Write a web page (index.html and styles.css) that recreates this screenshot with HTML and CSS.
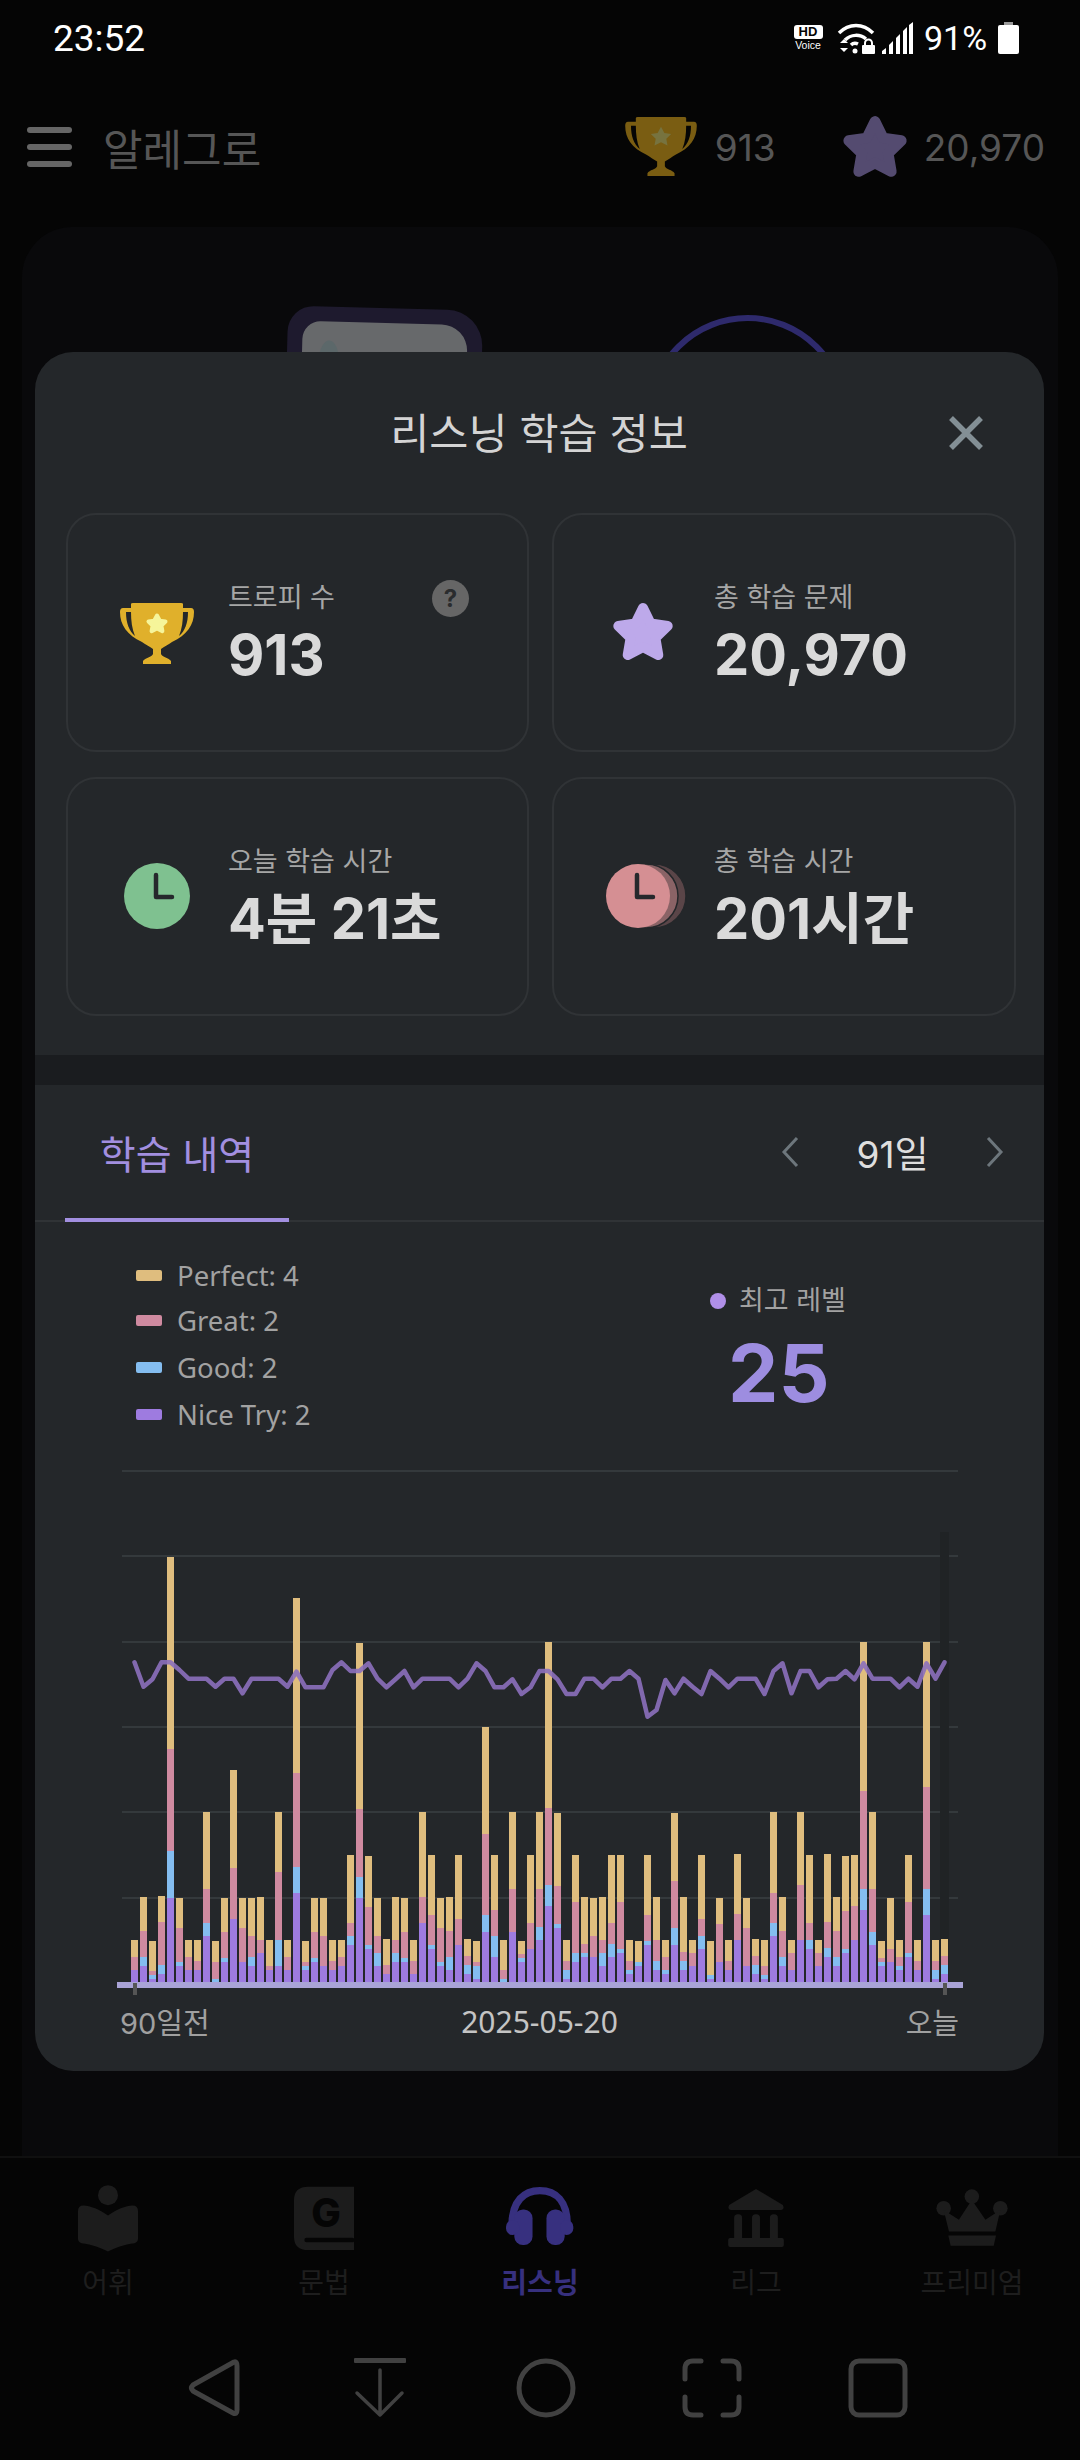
FILE: index.html
```html
<!DOCTYPE html>
<html lang="ko">
<head>
<meta charset="utf-8">
<title>리스닝 학습 정보</title>
<link rel="stylesheet" href="styles.css">
</head>
<body>
<div class="screen">
  <div class="status">
    <span class="clock-time">23:52</span>
    <div class="status-right">
      <div class="hd"><span class="hd-top">HD</span><span class="hd-bot">Voice</span></div>
      <svg class="st-wifi" viewBox="0 0 38 32"><path class="st-line" d="M2 11C12 1 26 1 36 11"/><path class="st-line" d="M8 18C14 12 23 12 29 17"/><path class="st-line" d="M14 23C16 21 19 21 21 22"/><circle class="st-fill" cx="18" cy="29" r="2.5"/><path class="st-fill" d="M3 21l4-4 4 4zM3 26h8l-4 4z"/><rect class="st-fill" x="25" y="23" width="13" height="9" rx="1"/><path class="st-thin" d="M28 24v-3a3.500 3.500 0 0 1 7 0v3"/></svg>
      <svg class="st-signal" viewBox="0 0 31 32"><path class="st-fill" d="M0 32v-3l4-3v6zM7 32V23l4-4v13zM14 32V16l4-4v20zM21 32V9l4-4v27zM27 32V3l4-3v32z"/></svg>
      <span class="st-pct">91%</span>
      <svg class="st-batt" viewBox="0 0 21 32"><rect class="st-dim" x="6" width="9" height="3"/><rect class="st-fill" y="3" width="21" height="29" rx="2"/></svg>
    </div>
  </div>

  <header class="topbar">
    <div class="burger"><i></i><i></i><i></i></div>
    <span class="app-name">알레그로</span>
    <div class="top-stats">
      <svg class="top-trophy" viewBox="0 0 76 62">
        <path class="tr-dim" fill-rule="evenodd" d="M12 1Q12 0 14 0H62Q64 0 64 1V5H72Q75 5 75 9C75 22 68 32 53 39C50 41 45 44 42 46L42 51C43 54 50 55 52 58V61H24V58C26 55 33 54 34 51L34 46C31 44 26 41 23 39C8 32 1 22 1 9Q1 5 4 5H12ZM7 9H12C12 18 13 26 16 33C10 28 7 20 7 9ZM69 9H64C64 18 63 26 60 33C66 28 69 20 69 9Z"/>
        <path class="tr-dim-star" d="M38 10l3.500 6.500 7 1-5 5 1.200 7L38 26l-6.700 3.500 1.200-7-5-5 7-1z"/>
      </svg>
      <span class="top-num">913</span>
      <svg class="top-star" viewBox="0 0 64 62"><path class="star-dim" d="M32 7L39.600 22.500 56.700 25 44.400 37 47.300 54 32 46 16.700 54 19.600 37 7.300 25 24.400 22.500Z"/></svg>
      <span class="top-num">20,970</span>
    </div>
  </header>

  <main class="bg-card">
    <div class="art">
      <div class="art-book"><div class="art-page"><span class="art-blob"></span></div></div>
      <div class="art-ring"></div>
    </div>
  </main>

  <nav class="tabbar">
    <div class="tab-item">
      <svg class="tab-ic ic-reader" viewBox="114 44 180 200"><circle class="nav-fill" cx="204" cy="74" r="30"/><path class="nav-fill" d="M204 135C180 118 150 105 130 105Q114 105 114 122V205Q114 215 125 218C155 222 185 232 204 243C223 232 253 222 283 218Q294 215 294 205V122Q294 105 278 105C258 105 228 118 204 135Z"/></svg>
      <span class="tab-label">어휘</span>
    </div>
    <div class="tab-item">
      <svg class="tab-ic ic-gbook" viewBox="762 48 180 192"><path class="nav-fill" d="M762 90Q762 50 805 50H942V240H805Q762 240 762 200Z"/><rect class="nav-cut" x="793" y="203" width="150" height="14" rx="7"/><text class="nav-g" x="858" y="170" text-anchor="middle">G</text></svg>
      <span class="tab-label">문법</span>
    </div>
    <div class="tab-item active">
      <svg class="tab-ic ic-phones" viewBox="15 50 205 178"><path class="hp-band" d="M33 165C33 92 70 61 117 61C165 61 200 92 200 165"/><rect class="hp-cup" x="40" y="118" width="55" height="107" rx="26"/><rect class="hp-cup" x="137" y="118" width="55" height="107" rx="26"/><rect class="hp-cup" x="15" y="150" width="40" height="45" rx="20"/><rect class="hp-cup" x="178" y="150" width="40" height="45" rx="20"/></svg>
      <span class="tab-label">리스닝</span>
    </div>
    <div class="tab-item">
      <svg class="tab-ic ic-bank" viewBox="660 57 168 175"><path class="nav-fill" d="M744 57L825 105Q831 120 820 120H668Q657 120 663 105Z"/><rect class="nav-fill" x="678" y="133" width="24" height="85" rx="11"/><rect class="nav-fill" x="732" y="133" width="24" height="85" rx="11"/><rect class="nav-fill" x="786" y="133" width="24" height="85" rx="11"/><rect class="nav-fill" x="660" y="205" width="168" height="27" rx="6"/></svg>
      <span class="tab-label">리그</span>
    </div>
    <div class="tab-item">
      <svg class="tab-ic ic-crown" viewBox="1262 57 215 172"><circle class="nav-fill" cx="1369" cy="80" r="22"/><circle class="nav-fill" cx="1284" cy="115" r="22"/><circle class="nav-fill" cx="1455" cy="115" r="22"/><path class="nav-fill" d="M1369 90L1410 150 1455 120 1440 185H1300L1284 120 1330 150Z"/><path class="nav-fill" d="M1298 197H1442L1435 228H1305Z"/></svg>
      <span class="tab-label">프리미엄</span>
    </div>
  </nav>

  <div class="sysnav">
    <div class="sys-cell"><svg class="sys-ic" viewBox="0 0 52 60"><path class="sys-line" d="M46 4Q49 3 49 8V52Q49 57 45 55L5 33Q2 30 5 27Z"/></svg></div>
    <div class="sys-cell"><svg class="sys-ic" viewBox="0 0 52 60"><rect class="sys-solid" y="0" width="52" height="5" rx="1"/><path class="sys-line-thin" d="M26 12V57M3 35L26 57 48 35"/></svg></div>
    <div class="sys-cell"><svg class="sys-ic" viewBox="0 0 60 60"><circle class="sys-line" cx="30" cy="30" r="27"/></svg></div>
    <div class="sys-cell"><svg class="sys-ic" viewBox="0 0 60 60"><path class="sys-line" d="M3 21V11Q3 3 11 3H19M41 3H49Q57 3 57 11V21M57 39V49Q57 57 49 57H41M19 57H11Q3 57 3 49V39"/></svg></div>
    <div class="sys-cell"><svg class="sys-ic" viewBox="0 0 60 60"><rect class="sys-line" x="3" y="3" width="54" height="54" rx="8"/></svg></div>
  </div>

  <section class="modal">
    <div class="modal-head">
      <h1 class="modal-title">리스닝 학습 정보</h1>
      <svg class="modal-close" viewBox="0 0 36 36"><path d="M3 3L33 33M33 3L3 33"/></svg>
    </div>

    <div class="cards">
      <div class="card">
        <svg class="ic-trophy" viewBox="0 0 76 62">
          <path class="tr-fill" fill-rule="evenodd" d="M12 1Q12 0 14 0H62Q64 0 64 1V5H72Q75 5 75 9C75 22 68 32 53 39C50 41 45 44 42 46L42 51C43 54 50 55 52 58V61H24V58C26 55 33 54 34 51L34 46C31 44 26 41 23 39C8 32 1 22 1 9Q1 5 4 5H12ZM7 9H12C12 18 13 26 16 33C10 28 7 20 7 9ZM69 9H64C64 18 63 26 60 33C66 28 69 20 69 9Z"/>
          <path class="tr-star" d="M38 12.500l2.800 5.200 5.700 .8-4.100 4 1 5.700-5.400-2.800-5.400 2.800 1-5.700-4.100-4 5.700-.8z"/>
        </svg>
        <div class="card-text"><span class="card-label">트로피 수</span><span class="card-value">913</span></div>
        <span class="help">?</span>
      </div>
      <div class="card">
        <svg class="ic-star" viewBox="0 0 64 62"><path class="star-fill" d="M32 7L39.600 22.500 56.700 25 44.400 37 47.300 54 32 46 16.700 54 19.600 37 7.300 25 24.400 22.500Z"/></svg>
        <div class="card-text"><span class="card-label">총 학습 문제</span><span class="card-value">20,970</span></div>
      </div>
      <div class="card">
        <svg class="ic-clock" viewBox="0 0 66 66"><circle class="clk-green" cx="33" cy="33" r="33"/><path class="clk-hand" d="M32 12V34H48"/></svg>
        <div class="card-text"><span class="card-label">오늘 학습 시간</span><span class="card-value">4분 21초</span></div>
      </div>
      <div class="card">
        <svg class="ic-clocks" viewBox="0 0 82 66"><circle class="clk-back2" cx="49" cy="33" r="32"/><circle class="clk-back1" cx="41" cy="33" r="32"/><circle class="clk-pink" cx="33" cy="33" r="32"/><path class="clk-hand" d="M32 12V34H48"/></svg>
        <div class="card-text"><span class="card-label">총 학습 시간</span><span class="card-value">201시간</span></div>
      </div>
    </div>

    <div class="band"></div>

    <div class="tabs">
      <div class="tab-on">학습 내역</div>
      <div class="range">
        <svg class="chev" viewBox="0 0 18 32"><path d="M16 2L3 16 16 30"/></svg>
        <span class="range-val">91일</span>
        <svg class="chev" viewBox="0 0 18 32"><path d="M2 2L15 16 2 30"/></svg>
      </div>
    </div>

    <div class="stats">
      <ul class="legend">
        <li class="lg-row lg-first"><i class="sw sw-perfect"></i>Perfect: 4</li>
        <li class="lg-row"><i class="sw sw-great"></i>Great: 2</li>
        <li class="lg-row"><i class="sw sw-good"></i>Good: 2</li>
        <li class="lg-row"><i class="sw sw-nice"></i>Nice Try: 2</li>
      </ul>
      <div class="level">
        <div class="level-label"><i class="level-dot"></i>최고 레벨</div>
        <div class="level-val">25</div>
      </div>
    </div>

    <svg id="chart" class="chart" viewBox="36 1450 1008 550"></svg>

    <div class="axis-labels"><span>90일전</span><span class="axis-date">2025-05-20</span><span class="axis-end">오늘</span></div>
  </section>
</div>
<script src="chart.js"></script>
</body>
</html>
```

FILE: styles.css
```css
* { box-sizing: border-box; }
html, body { margin: 0; padding: 0; background: #050505; }
body { font-family: "Inter", "Noto Sans CJK KR", sans-serif; }
.screen { position: relative; width: 1080px; height: 2460px; overflow: hidden; display: flex; flex-direction: column; background: #050505; }

/* status bar */
.status { height: 76px; flex: none; display: flex; align-items: center; justify-content: space-between; padding: 0 61px 0 53px; color: #fff; font-family: "Roboto", sans-serif; }
.clock-time { font-size: 37px; }
.status-right { display: flex; align-items: center; }
.hd { width: 30px; display: flex; flex-direction: column; align-items: center; margin-right: 14px; }
.hd-top { width: 29px; height: 14px; background: #fff; color: #050505; border-radius: 3px; font: 700 13px/14px "Liberation Sans", sans-serif; text-align: center; }
.hd-bot { font: 400 10.500px/12px "Liberation Sans", sans-serif; margin-top: 0; }
.st-wifi { width: 38px; height: 32px; margin-right: 7px; }
.st-signal { width: 31px; height: 32px; margin-right: 11px; }
.st-pct { font-size: 34px; width: 61px; margin-right: 13px; white-space: nowrap; }
.st-batt { width: 21px; height: 32px; }
.st-line { fill: none; stroke: #fff; stroke-width: 3.500; }
.st-thin { fill: none; stroke: #fff; stroke-width: 2; }
.st-fill { fill: #fff; }
.st-dim { fill: #9a9a9a; }

/* top bar */
.topbar { height: 142px; flex: none; display: flex; align-items: center; padding: 0 35px 0 27px; }
.burger { width: 45px; display: flex; flex-direction: column; gap: 11px; }
.burger i { display: block; height: 6px; border-radius: 3px; background: #666; }
.app-name { margin-left: 31px; font-size: 43px; color: #565656; }
.top-stats { margin-left: auto; display: flex; align-items: center; }
.top-trophy { width: 74px; height: 60px; margin-right: 17px; }
.top-star { width: 70px; height: 66px; margin: 0 14px 0 64px; }
.top-num { font-size: 37px; color: #565656; }
.tr-dim { fill: #7a5d12; }
.tr-dim-star { fill: #77733f; }
.star-dim { fill: #544b70; stroke: #544b70; stroke-width: 10; stroke-linejoin: round; }

/* dimmed background card */
.bg-card { height: 1929px; flex: none; margin: 9px 22px 0; background: #09090b; border-radius: 50px 50px 0 0; }
.art { position: relative; height: 125px; overflow: hidden; }
.art-book { position: absolute; left: 265px; top: 81px; width: 195px; height: 90px; background: #1e1a2e; border-radius: 26px 36px 0 0; transform: rotate(1.500deg); padding: 15px 15px 0; }
.art-page { height: 70px; background: #67696b; border-radius: 18px 26px 0 0; position: relative; }
.art-blob { position: absolute; left: 17px; top: 19px; width: 20px; height: 40px; border-radius: 50%; background: #5c686a; }
.art-ring { position: absolute; left: 625px; top: 88px; width: 201px; height: 201px; border: 6px solid #2e2a6c; border-radius: 50%; }

/* bottom tab bar */
.tabbar { height: 154px; flex: none; border-top: 2px solid #101010; background: #050505; display: grid; grid-template-columns: repeat(5, 1fr); padding-top: 27px; }
.tab-item { display: flex; flex-direction: column; align-items: center; }
.tab-ic { display: block; flex: none; }
.ic-reader { width: 60px; height: 67px; margin-bottom: 1px; }
.ic-gbook { width: 60px; height: 64px; margin: 1px 0 3px; }
.ic-phones { width: 68px; height: 59px; margin: 2px 0 7px; }
.ic-bank { width: 56px; height: 58px; margin: 4px 0 6px; }
.ic-crown { width: 72px; height: 57px; margin: 4px 0 7px; }
.tab-label { margin-top: 8px; font-size: 28px; line-height: 44px; color: #1e1e1e; }
.tab-item.active .tab-label { color: #37307f; font-weight: 700; }
.nav-fill { fill: #1c1c1c; }
.nav-cut { fill: #050505; }
.nav-g { font: 800 118px "Inter", sans-serif; fill: #050505; }
.hp-band { fill: none; stroke: #37307f; stroke-width: 22; }
.hp-cup { fill: #37307f; }

/* system nav */
.sysnav { flex: 1; display: flex; justify-content: center; padding: 48px 0 0 12px; background: #050505; }
.sys-cell { width: 166px; display: flex; justify-content: center; }
.sys-ic { width: 60px; height: 60px; }
.sys-line { fill: none; stroke: #414141; stroke-width: 5; stroke-linejoin: round; stroke-linecap: round; }
.sys-line-thin { fill: none; stroke: #414141; stroke-width: 3.500; stroke-linejoin: round; stroke-linecap: round; }
.sys-solid { fill: #414141; }

/* modal */
.modal { position: absolute; left: 35px; top: 352px; width: 1009px; height: 1719px; background: #24272a; border-radius: 38px; color: #ddd; }
.modal-head { height: 161px; display: flex; align-items: center; justify-content: center; position: relative; padding: 0 1px 4px 0; }
.modal-title { margin: 0; font-size: 42.500px; font-weight: 400; color: #d4d4d4; }
.modal-close { position: absolute; right: 60px; top: 63px; width: 36px; height: 36px; }
.modal-close path { fill: none; stroke: #838f95; stroke-width: 5.500; }

.cards { display: grid; grid-template-columns: 463px 464px; grid-template-rows: 239px 239px; column-gap: 23px; row-gap: 25px; padding-left: 31px; }
.card { position: relative; display: flex; align-items: center; border: 2px solid #303336; border-radius: 30px; padding-left: 160px; }
.card-text { display: flex; flex-direction: column; }
.card-label { font-size: 27px; line-height: 38px; color: #a6a6a6; }
.card-value { font-size: 56px; line-height: 64px; font-weight: 700; color: #dadada; white-space: nowrap; margin-top: 6px; }
.help { position: absolute; left: 364px; top: 65px; width: 37px; height: 37px; border-radius: 50%; background: #666; color: #2a2c2e; font: 700 24px/37px "Inter", sans-serif; text-align: center; }
.ic-trophy { position: absolute; left: 51px; top: 88px; width: 76px; height: 62px; }
.tr-fill { fill: #e0b02b; }
.tr-star { fill: #f6f59a; stroke: #f6f59a; stroke-width: 4; stroke-linejoin: round; }
.ic-star { position: absolute; left: 57px; top: 86px; width: 64px; height: 62px; }
.star-fill { fill: #bda9ea; stroke: #bda9ea; stroke-width: 10; stroke-linejoin: round; }
.ic-clock { position: absolute; left: 56px; top: 84px; width: 66px; height: 66px; }
.ic-clocks { position: absolute; left: 51px; top: 84px; width: 82px; height: 66px; }
.clk-green { fill: #7fc190; }
.clk-pink { fill: #d58f93; }
.clk-back1 { fill: #8a6366; stroke: #24272a; stroke-width: 1.500; }
.clk-back2 { fill: #5a4548; stroke: #24272a; stroke-width: 1.500; }
.clk-hand { fill: none; stroke: #26282c; stroke-width: 4.500; stroke-linejoin: round; stroke-linecap: round; }

.band { height: 30px; margin-top: 39px; background: #1a1c1f; }
.tabs { height: 137px; display: flex; justify-content: space-between; border-bottom: 2px solid #303336; padding: 0 40px 0 30px; }
.tab-on { width: 224px; height: 137px; display: flex; align-items: center; justify-content: center; border-bottom: 4px solid #a28fe0; font-size: 39px; color: #a28fe0; }
.range { display: flex; align-items: center; padding-bottom: 2px; }
.chev { width: 18px; height: 32px; }
.chev path { fill: none; stroke: #6d767c; stroke-width: 3; }
.range-val { width: 187px; text-align: center; font-size: 37px; color: #dedede; }

.stats { height: 228px; display: flex; }
.legend { list-style: none; margin: 0; padding: 31px 0 0 101px; width: 675px; font-family: "Noto Sans", sans-serif; font-size: 27.500px; color: #a2a2a2; }
.lg-row { height: 47px; display: flex; align-items: center; gap: 15px; }
.lg-first { height: 44px; }
.sw { width: 26px; height: 11px; border-radius: 2px; }
.sw-perfect { background: #dfbd7e; }
.sw-great { background: #cf8aa0; }
.sw-good { background: #84bdf0; }
.sw-nice { background: #9e7be0; }
.level { padding-top: 59px; }
.level-label { display: flex; align-items: center; gap: 13px; font-size: 27px; line-height: 40px; color: #a2a2a2; }
.level-dot { width: 16px; height: 16px; border-radius: 50%; background: #b08fe8; }
.level-val { margin: 6px 0 0 18px; font-size: 80px; line-height: 92px; font-weight: 700; color: #9d8de0; }

.chart { display: block; width: 1008px; height: 550px; margin-left: 1px; }
.grid-line { stroke: #3a4043; stroke-width: 1.500; }
.hover-col { fill: #202325; }
.bar-y { fill: #dfbd7e; }
.bar-p { fill: #cf8aa0; }
.bar-b { fill: #84bdf0; }
.bar-v { fill: #9e7be0; }
.axis-line { fill: #a9a3d6; }
.axis-tick { fill: #555; }
.trend { fill: none; stroke: #8c70bc; stroke-opacity: .9; stroke-width: 4.500; stroke-linejoin: round; stroke-linecap: round; }

.axis-labels { height: 42px; display: grid; grid-template-columns: 1fr auto 1fr; align-items: center; padding: 0 85px 0 85px; font-size: 29px; color: #a0a0a0; }
.axis-date { font-size: 30px; color: #c4c4c4; font-family: "Noto Sans", sans-serif; }
.axis-end { text-align: right; }
```

FILE: chart.js
```js
// Stacked daily results: [perfect top, great top, good top, nice-try top], measured in 1/3 px above the baseline scale.
var D = [
[1260,1311,1350,1350],[1131,1233,1311,1338],[1263,1353,1365,1377],[1128,1206,1335,1362],[111,687,993,1134],
[1134,1224,1326,1338],[1260,1311,1350,1350],[1260,1323,1350,1350],[876,1107,1209,1248],[1263,1326,1377,1386],
[1134,1236,1314,1326],[750,1044,1197,1197],[1134,1224,1326,1326],[1134,1248,1311,1338],[1131,1260,1299,1299],
[1260,1338,1350,1350],[876,1056,1260,1338],[1260,1311,1350,1350],[234,759,1041,1119],[1263,1326,1338,1350],
[1134,1236,1314,1326],[1134,1248,1338,1338],[1260,1323,1350,1350],[1260,1311,1338,1338],[1005,1209,1248,1275],
[369,867,1071,1134],[1008,1161,1275,1287],[1134,1248,1299,1338],[1257,1335,1362,1362],[1131,1260,1299,1326],
[1134,1236,1314,1326],[1260,1323,1362,1362],[876,1131,1209,1209],[1005,1185,1275,1287],[1134,1224,1326,1338],
[1131,1233,1311,1350],[1005,1197,1275,1275],[1257,1308,1335,1362],[1263,1326,1338,1377],[621,942,1185,1236],
[1005,1170,1248,1311],[1260,1350,1377,1386],[876,1107,1236,1236],[1263,1302,1314,1326],[1005,1209,1287,1287],
[876,1107,1221,1260],[366,864,1095,1158],[879,1098,1212,1224],[1260,1323,1350,1377],[1005,1146,1299,1326],
[1131,1272,1299,1311],[1134,1248,1311,1311],[1131,1260,1299,1338],[1005,1209,1272,1311],[1005,1146,1287,1299],
[1260,1323,1350,1362],[1263,1326,1326,1338],[1005,1185,1263,1275],[1131,1260,1323,1350],[1260,1311,1350,1362],
[879,1083,1224,1275],[1131,1296,1323,1350],[1260,1299,1338,1338],[1005,1197,1248,1287],[1263,1365,1365,1377],
[1134,1212,1326,1326],[1260,1323,1350,1350],[1002,1182,1260,1260],[1134,1224,1338,1338],[1257,1308,1335,1362],
[1260,1338,1365,1377],[876,1119,1209,1248],[1131,1233,1311,1338],[1260,1299,1350,1350],[876,1095,1260,1260],
[1005,1209,1260,1287],[1260,1299,1338,1338],[1002,1206,1284,1311],[1131,1233,1311,1338],[1008,1173,1287,1299],
[1005,1158,1260,1260],[366,813,1107,1170],[876,1107,1236,1275],[1263,1314,1326,1338],[1134,1287,1326,1326],
[1260,1311,1338,1350],[1005,1146,1299,1311],[1260,1323,1350,1350],[366,801,1107,1185],[1260,1323,1350,1377],
[1257,1308,1335,1362]
];
var L = [427,500,478,427,427,450,476,476,476,500,476,476,520,476,476,476,476,500,455,502,502,502,450,427,453,453,430,476,502,478,453,502,476,476,476,476,502,476,430,453,502,502,478,522,502,453,453,478,522,522,476,476,502,476,476,453,476,590,570,480,520,476,500,522,453,476,502,476,476,476,522,453,430,520,453,453,502,478,476,453,478,430,476,476,476,502,476,500,430,476,427];

var BASE = 1386, TOP = 1520;
function py(z) { return TOP + z / 3; }

var h = '';
[1471, 1556, 1642, 1727, 1812, 1898].forEach(function (y) {
  h += '<line class="grid-line" x1="122" x2="958" y1="' + y + '" y2="' + y + '"/>';
});
h += '<rect class="hover-col" x="940" y="1532" width="9" height="450"/>';
D.forEach(function (b, i) {
  var x = 131 + 9 * i;
  var cls = ['bar-y', 'bar-p', 'bar-b', 'bar-v'];
  for (var k = 0; k < 4; k++) {
    var bottom = k < 3 ? b[k + 1] : BASE;
    if (bottom > b[k]) {
      h += '<rect class="' + cls[k] + '" x="' + x + '" y="' + py(b[k]) + '" width="7" height="' + ((bottom - b[k]) / 3) + '"/>';
    }
  }
});
h += '<rect class="axis-line" x="117" y="1982" width="846" height="6"/>';
h += '<rect class="axis-tick" x="133" y="1983" width="4" height="12"/>';
h += '<rect class="axis-tick" x="943" y="1983" width="4" height="12"/>';
var pts = L.map(function (z, i) { return (134.5 + 9 * i) + ',' + py(z).toFixed(1); }).join(' ');
h += '<polyline class="trend" points="' + pts + '"/>';
document.getElementById('chart').innerHTML = h;
```
